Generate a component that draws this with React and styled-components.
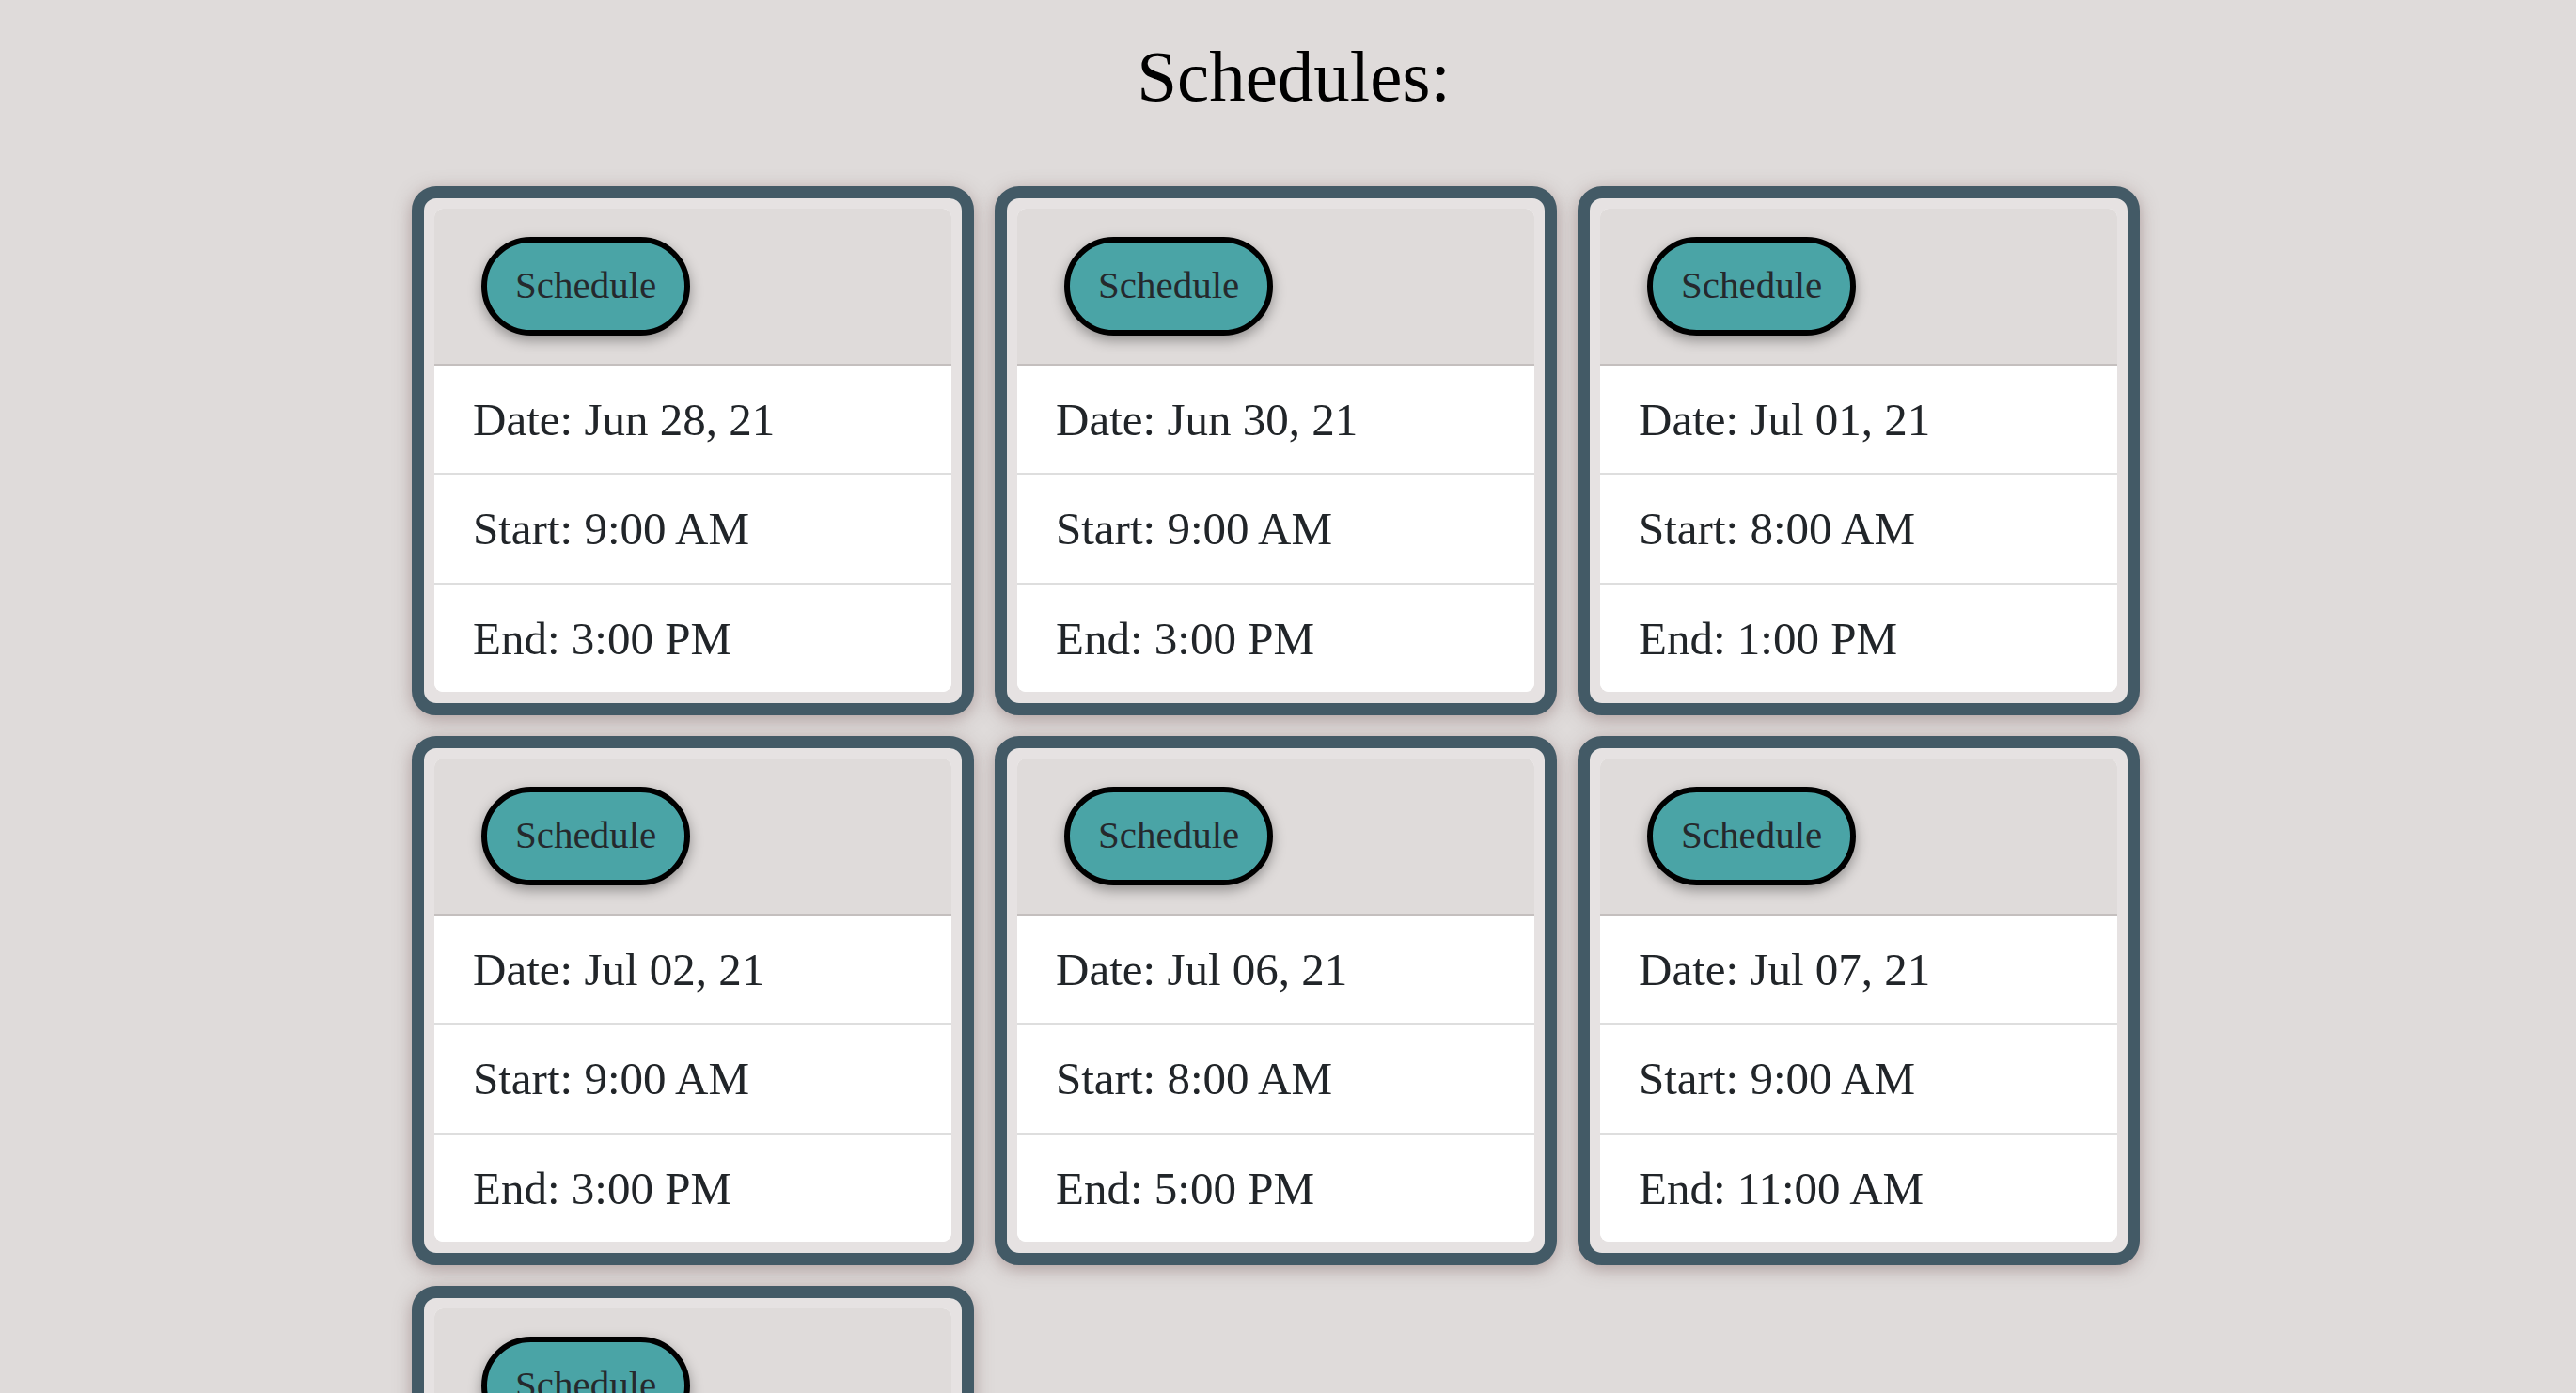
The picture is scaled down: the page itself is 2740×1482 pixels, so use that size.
import styled, { createGlobalStyle } from 'styled-components';

const GlobalStyle = createGlobalStyle`
	html,
	body {
		margin: 0;
		padding: 0;
		background-color: #dfdbda;
	}

	body {
		font-family: "Liberation Serif", "Times New Roman", serif;
		color: #212529;
	}
`;

const Page = styled.main`
	display: flex;
	flex-direction: column;
	min-height: 100vh;
`;

const Title = styled.h1`
	margin: 0;
	padding: 37px 0 0 12px;
	font-size: 77px;
	font-weight: 400;
	line-height: normal;
	text-align: center;
	color: #000;
`;

const Grid = styled.section`
	display: grid;
	grid-template-columns: repeat(3, 598px);
	column-gap: 22px;
	row-gap: 22px;
	margin: 72px 0 40px 438px;
`;

const CardShell = styled.article`
	display: flex;
	flex-direction: column;
	padding: 11px 11px 12px;
	background-color: #e6e2e2;
	border: 13px solid #435a66;
	border-radius: 26px;
	box-shadow: 0 4px 18px rgba(125, 95, 95, 0.5);
`;

const Inner = styled.div`
	display: flex;
	flex-direction: column;
	background-color: #fff;
	border-radius: 9px;
	overflow: hidden;
`;

const Header = styled.header`
	display: flex;
	align-items: flex-start;
	padding: 30px 50px 30px;
	background-color: #dfdbda;
	border-bottom: 2px solid #c4bfbe;
`;

const PillButton = styled.button`
	padding: 15px 30px 16px;
	font-family: inherit;
	font-size: 41px;
	line-height: 1.5;
	color: #25292d;
	background-color: #4aa4a6;
	border: 6px solid #000;
	border-radius: 60px;
	box-shadow: 0 5px 14px rgba(0, 0, 0, 0.35);
	cursor: pointer;
`;

const Row = styled.div`
	padding: 21px 41px 20px;
	font-size: 49px;
	line-height: 1.5;
	background-color: #fff;
	border-top: ${(p) => (p.$first ? 'none' : '2px solid #dedede')};
`;

const schedules = [
	{ date: 'Jun 28, 21', start: '9:00 AM', end: '3:00 PM' },
	{ date: 'Jun 30, 21', start: '9:00 AM', end: '3:00 PM' },
	{ date: 'Jul 01, 21', start: '8:00 AM', end: '1:00 PM' },
	{ date: 'Jul 02, 21', start: '9:00 AM', end: '3:00 PM' },
	{ date: 'Jul 06, 21', start: '8:00 AM', end: '5:00 PM' },
	{ date: 'Jul 07, 21', start: '9:00 AM', end: '11:00 AM' },
	{ date: 'Jul 08, 21', start: '9:00 AM', end: '3:00 PM' },
];

const ScheduleCard = ({ item }) => (
	<CardShell>
		<Inner>
			<Header>
				<PillButton type="button">Schedule</PillButton>
			</Header>
			<Row $first>Date: {item.date}</Row>
			<Row>Start: {item.start}</Row>
			<Row>End: {item.end}</Row>
		</Inner>
	</CardShell>
);

const App = () => {
	return (
		<>
			<GlobalStyle />
			<Page>
				<Title>Schedules:</Title>
				<Grid>
					{schedules.map((item) => (
						<ScheduleCard key={item.date} item={item} />
					))}
				</Grid>
			</Page>
		</>
	);
};

export default App;
